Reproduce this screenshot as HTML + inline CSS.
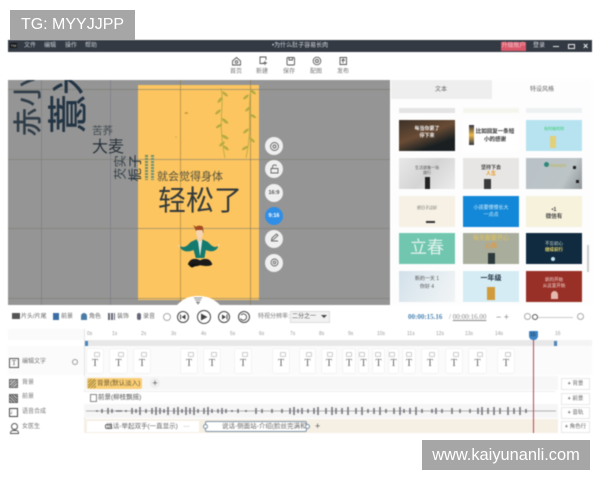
<!DOCTYPE html>
<html><head><meta charset="utf-8">
<style>
html,body{margin:0;padding:0;background:#fff}
#r{position:relative;width:600px;height:480px;overflow:hidden;background:#fff;font-family:"Liberation Sans","Noto Sans CJK SC",sans-serif}
#r div,#r span{position:absolute;white-space:nowrap}
#a{left:0;top:0;width:600px;height:480px;filter:blur(.5px)}
.m{top:42px;font-size:6px;color:#c8ccd0;line-height:9px}
.tb{font-size:6px;color:#777;top:68px;line-height:8px;width:24px;text-align:center}
.th{width:56px;height:31px;overflow:hidden}
.th span{left:0;width:100%;text-align:center}
.ct{width:18px;height:18px;border-radius:50%;background:#efefef;left:265px;text-align:center;font-size:6px;color:#555;line-height:18px}
.tl{font-size:5px;color:#999;top:331px;line-height:6px}
.T{top:349px;height:24px;background:#fff;box-shadow:0 0 1px #ccc;font-family:"Liberation Serif",serif;font-size:10px;color:#666;text-align:center;line-height:30px}
.T:after{content:"";position:absolute;right:3px;top:3px;width:4px;height:3px;border:1px solid #ccc;border-radius:1px}
.lb{left:22px;font-size:6px;color:#777;line-height:8px}
.pb{left:561px;width:29px;height:12px;background:#fff;border:1px solid #e8e8e8;box-sizing:border-box;font-size:5.5px;color:#666;line-height:10px;text-align:center}
.ic{left:9px;width:9px;height:9px;border:1px solid #666;box-sizing:border-box;background:repeating-linear-gradient(135deg,#666 0 1px,#ddd 1px 2px)}
.tool{font-size:6px;color:#666;top:313px;line-height:8px}
.cb{width:10px;height:10px;border:1.2px solid #444;border-radius:50%;box-sizing:content-box;top:311px}
.bg{transform:rotate(-90deg);text-align:center;-webkit-text-stroke:.4px currentColor}
</style></head><body>
<div id="r">
<div id="a">
<!-- titlebar -->
<div style="left:8px;top:40px;width:584px;height:12px;background:#333a44"></div>
<div style="left:10px;top:43px;width:7px;height:5px;background:#111;color:#ddd;font-size:4px;line-height:5px;text-align:center">TM</div>
<div class="m" style="left:24px">文件</div><div class="m" style="left:44px">编辑</div><div class="m" style="left:65px">操作</div><div class="m" style="left:85px">帮助</div>
<div class="m" style="left:272px;color:#d8dadd">•为什么肚子容易长肉</div>
<div style="left:501px;top:42px;width:25px;height:9px;background:#d9576a;color:#f5c5cc;font-size:6px;line-height:9px;text-align:center">升级账户</div>
<div class="m" style="left:533px;color:#d8dadd">登录</div>
<div style="left:553px;top:46px;width:6px;height:1px;background:#e8e8e8"></div>
<div style="left:568px;top:44px;width:5px;height:3px;border:1px solid #e8e8e8"></div>
<div style="left:583px;top:40px;color:#eee;font-size:9px;line-height:12px;font-weight:bold">×</div>
<!-- toolbar -->
<svg style="position:absolute;left:0;top:52px" width="600" height="28" fill="none" stroke="#555" stroke-width=".9">
<path d="M232.5 9 236.5 5.5 240.5 9V13H232.5Z"/><circle cx="236.5" cy="10" r="1.3"/>
<path d="M264 11.5H260V5H266V8M265 9V13M263 11H267"/>
<rect x="287" y="5.5" width="7.5" height="7.5" rx="1"/><path d="M289 6V8H292.5V6"/>
<circle cx="317" cy="9" r="3.8"/><circle cx="317" cy="9" r="1.5"/>
<path d="M340 5.5H346.5V12.5H340ZM343 11V7.5M341.5 8.8 343.2 7 345 8.8"/>
</svg>
<div class="tb" style="left:224px">首页</div><div class="tb" style="left:250px">新建</div><div class="tb" style="left:277px">保存</div><div class="tb" style="left:304px">配图</div><div class="tb" style="left:331px">发布</div>
<!-- canvas -->
<div style="left:8px;top:80px;width:382px;height:225px;background:#959595;overflow:hidden" id="cv">
<div style="left:130px;top:5px;width:121px;height:215px;background:#fcc55f"></div>
<div style="left:33px;top:0;width:1px;height:225px;background:#84848a"></div>
<div style="left:102px;top:0;width:1px;height:225px;background:#84848a"></div>
<div style="left:172px;top:0;width:1px;height:225px;background:rgba(150,120,60,.55)"></div>
<div style="left:242px;top:0;width:1px;height:225px;background:rgba(140,120,70,.6)"></div>
<div style="left:0;top:9px;width:382px;height:1px;background:rgba(120,120,110,.6)"></div>
<div style="left:0;top:79px;width:382px;height:1px;background:rgba(125,125,115,.6)"></div>
<div style="left:0;top:148px;width:382px;height:1px;background:rgba(125,125,115,.6)"></div>
<div style="left:0;top:218px;width:382px;height:1px;background:rgba(125,125,115,.6)"></div>
<div class="bg" style="left:5.500px;top:26.500px;width:30px;height:30px;font-size:29px;line-height:30px;color:#2f3d48">赤</div>
<div class="bg" style="left:5.500px;top:-3px;width:30px;height:30px;font-size:29px;line-height:30px;color:#2f3d48">小</div>
<div class="bg" style="left:41px;top:14px;width:40px;height:40px;font-size:40px;line-height:40px;color:#223444">薏</div>
<div class="bg" style="left:41px;top:-23px;width:40px;height:40px;font-size:36px;line-height:40px;color:#223444">米</div>
<div style="left:84px;top:45px;font-size:10.500px;line-height:13px;color:#3f4a50">苦荞</div>
<div style="left:84px;top:58px;font-size:16px;line-height:20px;color:#27323a">大麦</div>
<div style="left:98.500px;top:81px;font-size:12.500px;line-height:13px;color:#37434a;transform:rotate(-90deg);width:28px;text-align:center">芡实</div>
<div style="left:113px;top:79.500px;font-size:13.500px;line-height:16px;color:#26343c;transform:rotate(-90deg);width:30px;text-align:center">栀子</div>
<div style="left:137px;top:75px;width:3px;height:25px;background:repeating-linear-gradient(#7a8a5a 0 2px,#e7cc80 2px 3px)"></div>
<div style="left:143px;top:75px;width:3px;height:25px;background:repeating-linear-gradient(#6f8f70 0 2px,#e7cc80 2px 3px)"></div>
<div style="left:149px;top:90px;font-size:11px;line-height:14px;color:#55523f">就会觉得身体</div>
<div style="left:150px;top:103px;font-size:28px;line-height:36px;color:#333a3c">轻松了</div>
<svg style="position:absolute;left:0;top:0" width="382" height="225" fill="none">
<g transform="translate(-9 0)">
<g stroke="#b5a844" stroke-width=".8"><path d="M222 8C226 25 218 40 226 78"/><path d="M252 8C248 30 254 45 247 78"/></g>
<g fill="#b5aa42"><ellipse cx="221" cy="20" rx="3.5" ry="1.3" transform="rotate(-50 221 20)"/><ellipse cx="226" cy="14" rx="3.5" ry="1.3" transform="rotate(40 226 14)"/><ellipse cx="219" cy="32" rx="3.5" ry="1.3" transform="rotate(-40 219 32)"/><ellipse cx="226" cy="41" rx="4" ry="1.4" transform="rotate(40 226 41)"/><ellipse cx="220" cy="46" rx="3.5" ry="1.3" transform="rotate(-30 220 46)"/><ellipse cx="226" cy="57" rx="4" ry="1.4" transform="rotate(30 226 57)"/><ellipse cx="223" cy="64" rx="3.5" ry="1.3" transform="rotate(-40 223 64)"/><ellipse cx="227" cy="68" rx="3.5" ry="1.3" transform="rotate(40 227 68)"/>
<ellipse cx="254" cy="12" rx="3.5" ry="1.3" transform="rotate(40 254 12)"/><ellipse cx="247" cy="17" rx="3.5" ry="1.3" transform="rotate(-40 247 17)"/><ellipse cx="249" cy="29" rx="3.5" ry="1.3" transform="rotate(-40 249 29)"/><ellipse cx="254" cy="36" rx="3.5" ry="1.3" transform="rotate(30 254 36)"/><ellipse cx="247" cy="51" rx="3.5" ry="1.3" transform="rotate(-40 247 51)"/><ellipse cx="253" cy="60" rx="3.5" ry="1.3" transform="rotate(40 253 60)"/><ellipse cx="246" cy="68" rx="3.5" ry="1.3" transform="rotate(-30 246 68)"/></g>
</g>
<circle cx="179" cy="33" r="1" fill="#c99a3a"/><circle cx="177.500" cy="33" r=".8" fill="#b58a36"/><circle cx="168" cy="57" r=".8" fill="#c9ad4a"/>
<!-- figure -->
<g transform="translate(191 166) scale(.72 .8) translate(-190.5 -165)">
<path d="M179 160C174 165 170 168 164 165L166 169C172 173 178 172 183 170L186 180H198L200 170C206 172 211 173 216 168L217 165C212 168 208 165 203 160L196 157H186Z" fill="#157a6e"/>
<path d="M189 158 192 178 195 158Z" fill="#dfe9e6"/>
<rect x="188" y="151" width="7" height="8" fill="#f5d0a8"/>
<ellipse cx="191.500" cy="149" rx="5" ry="6.500" fill="#f6d5b2"/>
<path d="M186 146C185 142 183 140 182 139L187 141C188 139 193 139 196 141L197 150 195 145H188Z" fill="#a34a20"/>
<path d="M175 188C178 180 186 180 192 183C198 180 206 180 209 188C206 191 198 190 192 189C186 191 178 191 175 188Z" fill="#1a1a1a"/>
<path d="M181 187 177 190 181 192 190 188Z" fill="#111"/>
<circle cx="163" cy="165" r="1.400" fill="#f6d5b2"/><circle cx="218" cy="164" r="1.400" fill="#f6d5b2"/>
</g>
<path d="M169 225C175 219 180 216 190 216C200 216 206 219 212 225Z" fill="#fff"/>
<path d="M186 218H194M187 220H193M188.500 222H191.500L190 224Z" stroke="#666" stroke-width=".7"/>
</svg>
</div>
<!-- side buttons -->
<div class="ct" style="top:137px"></div><div class="ct" style="top:160px"></div>
<div class="ct" style="top:184px;font-weight:bold;font-size:5.500px">16:9</div>
<div class="ct" style="top:207px;background:#2f8fe6;color:#fff;font-weight:bold;font-size:5.500px">9:16</div>
<div class="ct" style="top:230px"></div><div class="ct" style="top:254px"></div>
<svg style="position:absolute;left:266px;top:138px" width="17" height="133" fill="none" stroke="#666" stroke-width=".9">
<circle cx="8.5" cy="8.5" r="4"/><circle cx="8.5" cy="8.5" r="1.5"/>
<path d="M5 30.5H12V35H5ZM6.500 30.5V28.5C7 26.5 10 26.5 10.5 28"/>
<path d="M5 103H12M6 100 10.5 96 12 97.5 7.5 101.5 5.5 102Z"/>
<circle cx="8.5" cy="124.5" r="3.5"/><circle cx="8.5" cy="124.5" r="1.3"/>
</svg>
<!-- right panel -->
<div style="left:391px;top:80px;width:201px;height:225px;background:#fdfdfd"></div>
<div style="left:391px;top:80px;width:101px;height:19px;background:#eeeeee"></div>
<div style="left:435px;top:86px;font-size:6px;line-height:8px;color:#666">文本</div>
<div style="left:530px;top:86px;font-size:6px;line-height:8px;color:#666">特设风格</div>
<div class="th" style="left:399px;top:108px;height:5px;background:#e4e4e4"></div>
<div class="th" style="left:463px;top:108px;height:5px;background:#f4f6ee"></div>
<div class="th" style="left:526px;top:108px;height:5px;background:#eef1f2"></div>
<div class="th" style="left:399px;top:120px;background:linear-gradient(160deg,#3c3128,#6a4c35 45%,#1a2022 75%)"><span style="top:6px;font-size:5px;color:#eee;line-height:7px;font-weight:bold">每当你累了<br>停下来</span></div>
<div class="th" style="left:463px;top:120px;background:#fff"><span style="top:8px;font-size:5.5px;color:#333;line-height:8px;font-weight:bold;left:8px;width:48px">比如回复一条短<br>小的感谢</span><div style="left:6px;top:5px;width:5px;height:20px;background:linear-gradient(#334,#eab84a 50%,#334)"></div></div>
<div class="th" style="left:526px;top:120px;background:#b7e2f0"><div style="left:24px;top:16px;width:6px;height:12px;background:#e3d07a"></div><span style="top:6px;font-size:4px;color:#3c6;line-height:6px">有时候的你</span></div>
<div class="th" style="left:399px;top:158px;background:linear-gradient(130deg,#e8e8e8,#d4d4d4 50%,#ececec)"><span style="top:7px;font-size:4px;color:#555;line-height:5px">生活就像一场<br>旅行</span><div style="left:26px;top:19px;width:5px;height:12px;background:#222"></div></div>
<div class="th" style="left:463px;top:158px;background:#e8e6e4"><span style="top:7px;font-size:5px;color:#444;line-height:6px;font-weight:bold">坚持下去<br><b style="color:#e8a23c">人生</b></span><div style="left:21px;top:21px;width:7px;height:10px;background:#3a3a3a"></div></div>
<div class="th" style="left:526px;top:158px;background:linear-gradient(120deg,#b9c2c8,#bcc4c6 70%,#8d9398)"><div style="left:18px;top:4px;width:5px;height:5px;border-radius:50%;background:#2f8a7a"></div><div style="left:24px;top:6px;width:16px;height:3px;background:#bdbf99"></div><div style="left:47px;top:8px;width:3px;height:3px;background:#222"></div><div style="left:50px;top:22px;width:3px;height:3px;background:#222"></div></div>
<div class="th" style="left:399px;top:196px;background:#f6f1e4"><span style="top:9px;font-size:4px;color:#666;line-height:6px">把日子过好</span><div style="left:27px;top:25px;width:9px;height:2px;background:#333"></div></div>
<div class="th" style="left:463px;top:196px;background:#1388d8"><span style="top:9px;font-size:5px;color:#d5eefb;line-height:7px">小孩要慢慢长大<br>一点点</span></div>
<div class="th" style="left:526px;top:196px;background:#f7f2dc"><span style="top:11px;font-size:5.5px;color:#444;line-height:7px;font-weight:bold">•1<br>微信有</span></div>
<div class="th" style="left:399px;top:233px;background:#71c6b0"><span style="top:0;font-size:17px;color:#e2f3ec;line-height:30px">立春</span></div>
<div class="th" style="left:463px;top:233px;background:#a9ad9b"><span style="top:2px;font-size:6px;color:#e6c352;line-height:8px">每天都要开心<br><b style="color:#e29a44">心情</b></span><div style="left:25px;top:20px;width:7px;height:11px;background:#2d3a3c"></div></div>
<div class="th" style="left:526px;top:233px;background:#102a40"><span style="top:8px;font-size:4.5px;color:#cfe0d0;line-height:6px">不忘初心<br><b style="color:#e8d66a">继续前行</b></span><div style="left:25px;top:24px;width:4px;height:4px;border-radius:50%;background:#bfe4ee"></div></div>
<div class="th" style="left:399px;top:271px;background:linear-gradient(120deg,#d3e0ea,#e6eef2 60%,#f2f4f5)"><span style="top:4px;font-size:5px;color:#555;line-height:8px">新的一天 1<br>你好 4</span></div>
<div class="th" style="left:463px;top:271px;background:#d5ecf4"><span style="top:3px;font-size:7px;color:#234;line-height:9px;font-weight:bold">一年级</span><div style="left:24px;top:16px;width:8px;height:13px;background:#d09b3c"></div></div>
<div class="th" style="left:526px;top:271px;background:#993028"><span style="top:6px;font-size:4.5px;color:#f2d9d2;line-height:6px">新的开始<br>从这里开始</span><div style="left:25px;top:20px;width:7px;height:8px;background:#e5b8ac;border-radius:50% 50% 0 0"></div></div>
<div style="left:587px;top:245px;width:2px;height:27px;background:#ccc"></div>
<!-- controls -->
<div style="left:12px;top:313px;width:8px;height:6px;background:#555"></div><div class="tool" style="left:21px">片头/片尾</div>
<div style="left:53px;top:313px;width:6px;height:7px;background:#3a6ea5"></div><div class="tool" style="left:61px">前景</div>
<div style="left:81px;top:313px;width:6px;height:7px;background:#4a7da5;border-radius:3px 3px 0 0"></div><div class="tool" style="left:89px">角色</div>
<div style="left:108px;top:313px;width:7px;height:7px;background:repeating-linear-gradient(90deg,#667 0 2px,#fff 2px 3px)"></div><div class="tool" style="left:117px">装饰</div>
<div style="left:137px;top:313px;width:4px;height:7px;background:#667;border-radius:2px"></div><div class="tool" style="left:143px">录音</div>
<div style="left:163px;top:313px;width:6px;height:6px;border:1px solid #aaa;border-radius:50%"></div>
<div class="cb" style="left:177px"></div><div class="cb" style="left:197px;width:12px;height:12px;top:310px"></div><div class="cb" style="left:218px"></div><div class="cb" style="left:238px"></div>
<svg style="position:absolute;left:176px;top:308px" width="80" height="18" fill="#444" stroke="none">
<path d="M4 6.500H5V11.500H4ZM9.500 6.500V11.500L5.500 9Z"/><path d="M25 5.500 31.500 9 25 12.500Z"/><path d="M46 6.500V11.500L50 9ZM50.500 6.500H51.500V11.500H50.500Z"/>
<path d="M65 7A3.200 3.200 0 1 1 64.500 10.500" fill="none" stroke="#444" stroke-width=".9"/>
</svg>
<div class="tool" style="left:258px;color:#777">特视分辨率:</div>
<div style="left:290px;top:311px;width:40px;height:12px;background:#f2f2f2;border:1px solid #ddd;box-sizing:border-box;font-size:6px;line-height:10px;color:#555;padding-left:1px">二分之一</div>
<div style="left:321px;top:315px;border:3px solid transparent;border-top:3px solid #444;border-bottom:0"></div>
<div style="left:408px;top:313px;font-size:7px;line-height:9px;color:#4b86b4;font-weight:bold;font-family:'Liberation Serif',serif">00:00:15.16</div>
<div style="left:449px;top:313px;font-size:7px;line-height:9px;color:#888;font-family:'Liberation Serif',serif">/ <u>00:00:16.00</u></div>
<div style="left:496px;top:312px;font-size:9px;line-height:10px;color:#888">− +</div>
<div style="left:524px;top:313px;width:5px;height:5px;border:1px solid #aaa;border-radius:50%"></div>
<div style="left:533px;top:317px;width:40px;height:1px;background:#ccc"></div>
<div style="left:532px;top:314px;width:4px;height:4px;border:1px solid #555;border-radius:50%;background:#fff"></div>
<div style="left:577px;top:313px;width:5px;height:5px;border:1px solid #aaa;border-radius:50%"></div>
<!-- timeline -->
<div style="left:8px;top:329px;width:584px;height:104px;background:#fff"></div>
<div style="left:8px;top:329px;width:76px;height:11px;background:#fafafa"></div>
<div style="left:84px;top:340px;width:474px;height:6px;background:#e8e8e8"></div>
<div style="left:558px;top:340px;width:34px;height:6px;background:#f4f4f4"></div>
<div style="left:85px;top:341px;width:3px;height:5px;background:#4d86b8"></div>
<div style="left:554px;top:341px;width:3px;height:5px;background:#4d86b8"></div>
<div style="left:8px;top:346px;width:584px;height:29px;background:#fbfbfb"></div>
<div style="left:84px;top:329px;width:1px;height:104px;background:#e5e5e5"></div>
<div class="tl" style="left:87px">0s</div><div class="tl" style="left:112px">1s</div><div class="tl" style="left:141px">2s</div><div class="tl" style="left:171px">3s</div><div class="tl" style="left:201px">4s</div><div class="tl" style="left:230px">5s</div><div class="tl" style="left:259px">6s</div><div class="tl" style="left:290px">7s</div><div class="tl" style="left:319px">8s</div><div class="tl" style="left:348px">9s</div><div class="tl" style="left:377px">10s</div><div class="tl" style="left:407px">11s</div><div class="tl" style="left:436px">12s</div><div class="tl" style="left:465px">13s</div><div class="tl" style="left:495px">14s</div><div class="tl" style="left:555px">16</div>
<div class="T" style="left:87px;width:16px">T</div><div class="T" style="left:110px;width:17px">T</div><div class="T" style="left:134px;width:16px">T</div><div class="T" style="left:181px;width:16px">T</div><div class="T" style="left:204px;width:16px">T</div><div class="T" style="left:235px;width:16px">T</div><div class="T" style="left:273px;width:16px">T</div><div class="T" style="left:300px;width:15px">T</div><div class="T" style="left:322px;width:14px">T</div><div class="T" style="left:343px;width:12px">T</div><div class="T" style="left:359px;width:9px">T</div><div class="T" style="left:373px;width:11px">T</div><div class="T" style="left:389px;width:9px">T</div><div class="T" style="left:403px;width:12px">T</div><div class="T" style="left:422px;width:16px">T</div><div class="T" style="left:446px;width:16px">T</div><div class="T" style="left:469px;width:17px">T</div><div class="T" style="left:498px;width:16px">T</div>
<div style="left:9px;top:358px;width:8px;height:8px;border:1px solid #555;font-size:7px;line-height:8px;text-align:center;color:#555;font-family:'Liberation Serif',serif">T</div>
<div class="lb" style="top:358px">编辑文字</div>
<div style="left:72px;top:359px;width:4px;height:4px;border:1px solid #999;border-radius:50%"></div>
<!-- rows -->
<div style="left:84px;top:376px;width:474px;height:14px;background:#f7f7f7"></div>
<div style="left:84px;top:391px;width:471px;height:13px;background:#fff;border-bottom:1px solid #eee;border-top:1px solid #eee"></div>
<div style="left:84px;top:404px;width:474px;height:14px;background:#f6f6f6"></div>
<div style="left:84px;top:419px;width:474px;height:14px;background:#f6f0e4"></div>
<div class="ic" style="top:379px"></div><div class="lb" style="top:379px">背景</div>
<div class="ic" style="top:394px;background:repeating-linear-gradient(45deg,#555 0 1px,#ccc 1px 2px)"></div><div class="lb" style="top:393px">前景</div>
<div style="left:9px;top:408px;width:9px;height:9px;border:1px solid #444;box-sizing:border-box;font-size:7px;line-height:7px;text-align:center;color:#444">♩</div><div class="lb" style="top:408px">语音合成</div>
<div style="left:11px;top:423px;width:5px;height:5px;border:1px solid #555;border-radius:50%"></div><div style="left:10px;top:430px;width:7px;height:2px;border:1px solid #555;border-radius:3px 3px 0 0"></div><div class="lb" style="top:423px">女医生</div>
<div style="left:87px;top:378px;width:55px;height:11px;background:#fbcf78;border-radius:2px;font-size:6.5px;line-height:11px;color:#6a5a30;padding-left:10px;box-sizing:border-box">背景(默认淡入)</div>
<div style="left:88px;top:379px;width:8px;height:9px;background:repeating-linear-gradient(135deg,#a48a3e 0 1px,transparent 1px 2px)"></div>
<div style="left:150px;top:378px;width:10px;height:10px;border-radius:50%;background:#eee;color:#555;font-size:9px;line-height:10px;text-align:center">+</div>
<div style="left:90px;top:394px;width:5px;height:6px;border:1px solid #888"></div>
<div style="left:98px;top:393px;font-size:6.5px;line-height:9px;color:#555">前景(柳枝飘摇)</div>
<svg style="position:absolute;left:86px;top:404px" width="470" height="14"><line x1="0" y1="7" x2="470" y2="7" stroke="#999" stroke-width=".7"/>
<path d="M10 7h2M16 5v4M22 4v6M26 5v4M30 7h6M40 6v2M46 4v6M50 5v4M54 3v8M60 5v4M66 4v6M70 3v8M74 4v6M78 5v4M82 3v8M88 4v6M92 3v8M96 5v4M100 3v8M104 4v6M108 3v8M112 5v4M118 4v6M122 3v8M126 5v4M132 5v4M136 4v6M140 5v4M146 6v2M152 5v4M160 6v2M170 4v6M176 5v4M186 5v4M196 5v4M204 4v6M208 3v8M212 5v4M216 4v6M222 5v4M228 4v6M232 3v8M240 4v6M246 3v8M250 4v6M256 4v6M262 3v8M270 4v6M276 3v8M282 5v4M288 4v6M294 3v8M300 5v4M308 4v6M314 3v8M318 5v4M324 4v6M330 3v8M336 5v4M346 5v4M350 4v6M356 5v4M366 4v6M374 5v4M384 5v4M392 4v6M396 3v8M402 4v6M408 3v8M414 4v6M422 3v8M428 4v6M434 3v8M440 5v4" stroke="#76767f" stroke-width="1.6" fill="none"/></svg>
<div style="left:87px;top:421px;width:112px;height:11px;background:#fff;font-size:6.5px;line-height:11px;color:#666;text-align:center;padding-left:10px;box-sizing:border-box">说话-举起双手(一直显示) &nbsp; ···</div>
<div style="left:105px;top:424px;width:5px;height:3px;border:1px solid #666;border-radius:2px"></div>
<div style="left:205px;top:421px;width:102px;height:11px;background:#fff;border:1px solid #7d92a5;border-radius:2px;box-sizing:border-box;font-size:6.5px;line-height:9px;color:#666;padding-left:16px;overflow:hidden">说话-侧面站-介绍(脸丝完满和)</div>
<div style="left:203px;top:424px;width:3px;height:3px;border:1px solid #7d92a5;border-radius:50%;background:#fff"></div>
<div style="left:305px;top:424px;width:3px;height:3px;border:1px solid #7d92a5;border-radius:50%;background:#fff"></div>
<div style="left:315px;top:421px;color:#555;font-size:9px;line-height:10px">+</div>
<div class="pb" style="top:378px"><b>+</b> 背景</div><div class="pb" style="top:393px"><b>+</b> 前景</div><div class="pb" style="top:407px"><b>+</b> 音轨</div><div class="pb" style="top:421px"><b>+</b> 角色行</div>
<!-- playhead -->
<div style="left:533px;top:335px;width:1px;height:98px;background:#b0485a"></div>
<div style="left:529px;top:331px;width:9px;height:9px;background:#3d85c6;border-radius:1px 1px 4px 4px"></div>
<div style="left:530px;top:332px;font-size:5px;line-height:6px;color:#234">15</div>
</div>
<!-- watermarks -->
<div style="left:10px;top:10px;width:125px;height:30px;background:#a6a6a6;color:#fff;font-size:16px;line-height:30px;text-align:center">TG: MYYJJPP</div>
<div style="left:422px;top:440px;width:168px;height:30px;background:#a6a6a6;color:#fff;font-size:16.400px;line-height:30px;text-align:center">www.kaiyunanli.com</div>
</div>
</body></html>
